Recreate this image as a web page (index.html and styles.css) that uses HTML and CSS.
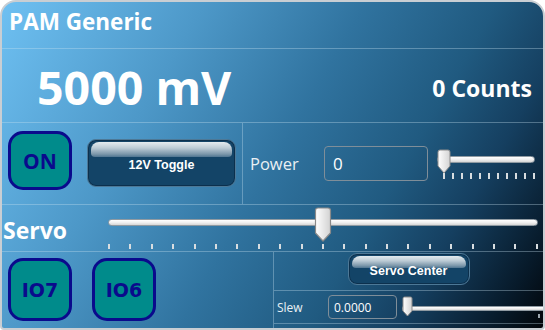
FILE: index.html
```html
<!DOCTYPE html>
<html>
<head>
<meta charset="utf-8">
<link rel="stylesheet" href="styles.css">
</head>
<body>
<div class="panel">
  <div class="row header"><span class="title">PAM Generic</span></div>
  <div class="row values">
    <span class="mv">5000 mV</span>
    <span class="counts">0 Counts</span>
  </div>
  <div class="row r3">
    <div class="r3-left">
      <div class="led led-on">ON</div>
      <div class="gloss toggle">12V Toggle</div>
    </div>
    <div class="r3-right">
      <span class="power-lbl">Power</span>
      <div class="field power-field">0</div>
      <div class="slider power-slider">
        <div class="track"></div>
        <svg class="thumb" style="left:0px" width="14" height="26" viewBox="0 0 14 26">
          <defs><linearGradient id="tg1" x1="0" y1="0" x2="1" y2="0"><stop offset="0" stop-color="#ffffff"/><stop offset="1" stop-color="#d4d4d4"/></linearGradient></defs>
          <path d="M1,3 Q1,1 3,1 H11 Q13,1 13,3 V17 L7,24 L1,17 Z" fill="url(#tg1)" stroke="#8c8c8c" stroke-width="1"/>
        </svg>
        <div class="ticks"><i></i><i></i><i></i><i></i><i></i><i></i><i></i><i></i><i></i><i></i><i></i></div>
      </div>
    </div>
  </div>
  <div class="row servo">
    <span class="servo-lbl">Servo</span>
    <div class="slider servo-slider">
      <div class="track"></div>
      <svg class="thumb" style="left:206px" width="18" height="36" viewBox="0 0 18 36">
        <defs><linearGradient id="tg2" x1="0" y1="0" x2="1" y2="0"><stop offset="0" stop-color="#ffffff"/><stop offset="1" stop-color="#d2d2d2"/></linearGradient></defs>
        <path d="M1.5,3.5 Q1.5,1 4,1 H14 Q16.5,1 16.5,3.5 V26 L9,34 L1.5,26 Z" fill="url(#tg2)" stroke="#8a8a8a" stroke-width="1.2"/>
      </svg>
      <div class="ticks"><i></i><i></i><i></i><i></i><i></i><i></i><i></i><i></i><i></i><i></i><i></i><i></i><i></i><i></i><i></i><i></i><i></i><i></i><i></i><i></i><i></i></div>
    </div>
  </div>
  <div class="row r5">
    <div class="r5-left">
      <div class="led led-io">IO7</div>
      <div class="led led-io">IO6</div>
    </div>
    <div class="r5-right">
      <div class="center-wrap"><div class="gloss center-btn">Servo Center</div></div>
      <div class="slew">
        <span class="slew-lbl">Slew</span>
        <div class="field slew-field">0.0000</div>
        <div class="slider slew-slider">
          <div class="track"></div>
          <svg class="thumb" style="left:0px" width="11" height="22" viewBox="0 0 11 22">
            <defs><linearGradient id="tg3" x1="0" y1="0" x2="1" y2="0"><stop offset="0" stop-color="#ffffff"/><stop offset="1" stop-color="#d2d2d2"/></linearGradient></defs>
            <path d="M1,2.5 Q1,1 2.5,1 H8.5 Q10,1 10,2.5 V15 L5.5,20 L1,15 Z" fill="url(#tg3)" stroke="#8a8a8a" stroke-width="1"/>
          </svg>
          <div class="slew-tick"></div>
        </div>
      </div>
    </div>
  </div>
</div>
</body>
</html>
```

FILE: styles.css
```css
* { box-sizing: border-box; }
html, body { margin: 0; padding: 0; background: #ffffff; }
body { font-family: "Open Sans", "Noto Sans", sans-serif; color: #ffffff; }

.panel {
  width: 545px;
  height: 330px;
  border: 2px solid #c9ced3;
  border-radius: 16px 16px 4px 4px;
  background: linear-gradient(120deg, #6ec0f2 0%, #4d98c8 28%, #30739f 50%, #205a80 68%, #153f60 80%, #071a2a 93%, #02060a 100%);
  overflow: hidden;
  display: flex;
  flex-direction: column;
}

.row { display: flex; border-top: 1px solid rgba(200, 225, 240, 0.35); }
.header { border-top: none; height: 46px; align-items: center; padding-left: 7px; }
.title { font-weight: 700; font-size: 22.5px; line-height: 1; margin-top: -6px; }

.values { height: 74px; align-items: center; justify-content: space-between; padding: 0 11px 0 35px; }
.mv { font-weight: 700; font-size: 46.5px; line-height: 1; margin-top: 4px; }
.counts { font-weight: 700; font-size: 23px; line-height: 1; margin-top: 6px; }

.r3 { height: 82px; }
.r3-left { width: 240px; display: flex; align-items: flex-start; padding: 8px 0 0 6px; gap: 15px; }
.r3-right { flex: 1; display: flex; align-items: center; border-left: 1px solid rgba(200, 225, 240, 0.35); padding-left: 7px; }

.led {
  background: #008b8b;
  border: 3px solid #0a0a8c;
  border-radius: 15px;
  color: #0a0a8c;
  font-family: "DejaVu Sans", sans-serif;
  font-weight: 700;
  display: flex;
  align-items: center;
  justify-content: center;
}
.led-on { width: 64px; height: 59px; font-family: "Open Sans", sans-serif; font-size: 21px; }
.led-io { width: 64px; height: 63px; font-size: 19px; }

.gloss {
  position: relative;
  z-index: 0;
  background: #134467;
  border: 1px solid #4d7896;
  box-shadow: inset 0 0 0 1px #0c304d;
  border-radius: 9px;
  color: #ffffff;
  font-family: "Liberation Sans", sans-serif;
  font-weight: 700;
  font-size: 12.5px;
  display: flex;
  align-items: center;
  justify-content: center;
}
.gloss::before {
  content: "";
  position: absolute;
  z-index: -1;
  left: 3px;
  right: 3px;
  top: 2px;
  height: 15px;
  border-radius: 8px 8px 4px 4px;
  background: linear-gradient(to bottom, #e4ebef 0%, #bccbd5 40%, #7d98ab 80%, #4f7591 100%);
}
.toggle { width: 149px; height: 48px; margin-top: 8px; padding-top: 3px; }
.center-btn { width: 122px; height: 32px; padding-top: 3px; }
.center-btn::before { height: 12px; }

.power-lbl { width: 74px; font-size: 16.5px; color: #e9f0f4; }
.field {
  border: 1.5px solid #7f8e99;
  border-radius: 4px;
  display: flex;
  align-items: center;
  color: #ffffff;
}
.power-field { width: 104px; height: 35px; font-size: 17px; padding-left: 8px; }

.slider { position: relative; }
.track {
  background: linear-gradient(to bottom, #ffffff 0%, #f0f0f0 50%, #d6d6d6 100%);
  border: 1px solid #8f9aa2;
  border-radius: 4px;
}
.thumb { position: absolute; top: 0; }
.ticks { display: flex; justify-content: space-between; }
.ticks i { display: block; width: 2px; background: #d8dde0; }

.power-slider { width: 98px; height: 30px; margin-left: 9px; }
.power-slider .track { height: 7px; margin-top: 7px; }
.power-slider .ticks { margin: 10px 0 0 6px; width: 92px; }
.power-slider .ticks i { height: 6px; }

.servo { height: 47px; }
.servo-lbl { width: 106px; font-weight: 700; font-size: 23px; padding-left: 1px; margin-top: 14px; line-height: 1; }
.servo-slider { width: 430px; }
.servo-slider .thumb { top: 2px; }
.servo-slider .track { height: 7px; margin-top: 14px; }
.servo-slider .ticks { margin-top: 18px; }
.servo-slider .ticks i { height: 5px; }

.r5 { flex: 1; }
.r5-left { width: 271px; display: flex; align-items: flex-start; gap: 20px; padding: 6px 0 0 6px; }
.r5-right { flex: 1; border-left: 1px solid rgba(200, 225, 240, 0.35); display: flex; flex-direction: column; }
.center-wrap { height: 38px; display: flex; justify-content: center; padding-top: 1px; }
.slew { height: 34px; display: flex; align-items: center; border-top: 1px solid rgba(200, 225, 240, 0.35); border-bottom: 1px solid rgba(200, 225, 240, 0.35); padding-left: 3px; }
.slew-lbl { width: 51px; font-size: 12px; color: #e9f0f4; }
.slew-field { width: 69px; height: 24px; font-size: 12px; padding-left: 5px; }
.slew-slider { flex: 1; height: 22px; margin-left: 5px; }
.slew-slider .track { height: 5px; margin-top: 10px; border-radius: 3px 0 0 3px; border-right: none; }
.slew-slider .thumb { top: 0; }
.slew-tick { position: absolute; right: 3px; top: 18px; width: 2px; height: 4px; background: #9aa5ad; }
```
